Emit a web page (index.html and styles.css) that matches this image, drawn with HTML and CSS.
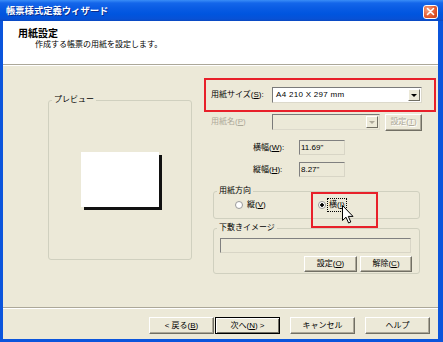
FILE: index.html
```html
<!DOCTYPE html>
<html>
<head>
    <meta charset="UTF-8" />
    <title>帳票様式定義ウィザード</title>
    <link rel="stylesheet" href="styles.css">
</head>
<body>
    <div class="window">
        <div class="titlebar">
            <span class="title">帳票様式定義ウィザード</span>
            <span class="close">
                <svg width="9" height="9" viewBox="0 0 9 9"><path d="M1.5 1.5 L7.5 7.5 M7.5 1.5 L1.5 7.5" stroke="#fff" stroke-width="1.6" stroke-linecap="round"/></svg>
            </span>
        </div>
        <div class="client">
            <div class="header">
                <div class="header-title">用紙設定</div>
                <div class="header-sub">作成する帳票の用紙を設定します。</div>
            </div>

            <div class="main">
                <fieldset class="group preview">
                    <legend>プレビュー</legend>
                    <div class="preview-area"><div class="paper"></div></div>
                </fieldset>

                <div class="settings">
                    <div class="row row-size">
                        <span class="label">用紙サイズ(<u>S</u>):</span>
                        <div class="combo size-combo">
                            <span class="combo-text">A4 210 X 297 mm</span>
                            <span class="drop"><span class="arrow"></span></span>
                        </div>
                    </div>
                    <div class="row row-name">
                        <span class="label disabled">用紙名(<u>P</u>)</span>
                        <div class="combo name-combo">
                            <span class="combo-text"></span>
                            <span class="drop"><span class="arrow"></span></span>
                        </div>
                        <button class="btn small disabled"><span>設定(<u>T</u>)</span></button>
                    </div>
                    <div class="row row-width">
                        <span class="label dim-label">横幅(<u>W</u>):</span>
                        <span class="field">11.69"</span>
                    </div>
                    <div class="row row-height">
                        <span class="label dim-label">縦幅(<u>H</u>):</span>
                        <span class="field">8.27"</span>
                    </div>

                    <fieldset class="group orient">
                        <legend>用紙方向</legend>
                        <div class="radios">
                            <span class="radio"><span class="dot"></span><span>縦(<u>V</u>)</span></span>
                            <span class="radio checked"><span class="dot"></span><span class="focus">横(<u>I</u>)</span></span>
                        </div>
                    </fieldset>

                    <fieldset class="group underlay">
                        <legend>下敷きイメージ</legend>
                        <span class="field wide"></span>
                        <div class="group-buttons">
                            <button class="btn set-btn"><span>設定(<u>O</u>)</span></button>
                            <button class="btn clear-btn"><span>解除(<u>C</u>)</span></button>
                        </div>
                    </fieldset>
                </div>

                <!-- annotation boxes and mouse pointer drawn over the dialog -->
                <div class="mark mark-size"></div>
                <div class="mark mark-orient"></div>
                <svg class="cursor" width="12" height="19" viewBox="0 0 12 19">
                    <path d="M0.5 0.5 L0.5 15.5 L4 12.2 L6.6 18 L8.8 17 L6.3 11.4 L11 11.4 Z" fill="#fff" stroke="#000" stroke-width="1" stroke-linejoin="round"/>
                </svg>
            </div>

            <div class="footer">
                <button class="btn nav"><span>&lt; 戻る(<u>B</u>)</span></button>
                <button class="btn nav default"><span>次へ(<u>N</u>) &gt;</span></button>
                <button class="btn nav spaced">キャンセル</button>
                <button class="btn nav spaced">ヘルプ</button>
            </div>
        </div>
    </div>
</body>
</html>
```

FILE: styles.css
```css
* {
    margin: 0;
    padding: 0;
    box-sizing: border-box;
}
body {
    font-family: "Liberation Sans", "Noto Sans CJK JP", sans-serif;
    font-size: 8px;
    line-height: 10px;
    color: #000;
    background: #fff;
    text-autospace: no-autospace;
}
.window {
    width: 443px;
    height: 342px;
    display: flex;
    flex-direction: column;
    background: #0B55DC;
}
.titlebar {
    height: 21px;
    flex: none;
    display: flex;
    align-items: center;
    justify-content: space-between;
    padding: 0 5px 0 6px;
    background: linear-gradient(#3A8DF7 0, #1466EA 3px, #0A5CE4 8px, #0055DF 14px, #0751D6 19px, #0A48C0 21px);
    color: #fff;
}
.title {
    font-size: 9.3px;
    font-weight: bold;
    text-shadow: 1px 1px 0 #0B2A8A;
}
.close {
    width: 15px;
    height: 14px;
    margin-top: 2px;
    border: 1px solid #fff;
    border-radius: 3px;
    background: radial-gradient(circle at 30% 30%, #F5A07E, #E2582E 60%, #C43D16);
    display: flex;
    align-items: center;
    justify-content: center;
}
.client {
    flex: 1;
    margin: 0 5px 3px 3px;
    background: #ECE9D8;
    display: flex;
    flex-direction: column;
}
.header {
    height: 44px;
    flex: none;
    background: #fff;
    border-bottom: 1px solid #ACA899;
    padding: 7px 0 0 15px;
}
.header-title {
    font-size: 10px;
    line-height: 12px;
    font-weight: bold;
}
.header-sub {
    padding-left: 17px;
    line-height: 10px;
}
.main {
    flex: 1;
    position: relative;
    display: flex;
    align-items: flex-start;
    border-top: 1px solid #fff;
    padding: 21px 0 0 45px;
}
.group {
    border: 1px solid #D0D0BF;
    border-radius: 3px;
}
.group legend {
    margin-left: 3px;
    padding: 0 2px;
    line-height: 10px;
}
.preview {
    width: 144px;
    height: 165px;
    margin-top: 8px;
}
.preview-area {
    height: 154px;
    display: flex;
    align-items: center;
    justify-content: center;
}
.paper {
    width: 78px;
    height: 55px;
    margin-bottom: 5px;
    background: #fff;
    box-shadow: 3px 3px 0 #111;
}
.settings {
    margin-left: 19px;
    width: 211px;
    display: flex;
    flex-direction: column;
}
.row {
    display: flex;
    align-items: center;
    height: 16px;
}
.row-name {
    margin-top: 11px;
}
.row-width {
    margin-top: 10px;
    height: 15px;
}
.row-height {
    margin-top: 7px;
    height: 15px;
}
.label {
    width: 61px;
}
.disabled {
    color: #ACA899;
}
.dim-label {
    margin-left: 42px;
    width: 46px;
}
.combo {
    height: 16px;
    display: flex;
    background: #fff;
    border: 1px solid;
    border-color: #7A7A7A #DCD9CB #DCD9CB #7A7A7A;
}
.combo-text {
    flex: 1;
    padding-left: 3px;
    line-height: 14px;
    letter-spacing: 0.3px;
}
.size-combo {
    width: 150px;
}
.name-combo {
    width: 108px;
    background: #ECE9D8;
}
.drop {
    width: 12px;
    margin: 1px;
    background: #ECE9D8;
    border: 1px solid;
    border-color: #fff #716F64 #716F64 #fff;
    display: flex;
    align-items: center;
    justify-content: center;
}
.arrow {
    border-left: 3px solid transparent;
    border-right: 3px solid transparent;
    border-top: 3px solid #000;
}
.name-combo .arrow {
    border-top-color: #ACA899;
}
.field {
    display: block;
    width: 46px;
    height: 15px;
    padding-left: 1px;
    line-height: 13px;
    background: #ECE9D8;
    border: 1px solid;
    border-color: #808080 #D8D5C6 #D8D5C6 #808080;
}
.btn {
    font-family: inherit;
    font-size: 8px;
    line-height: 10px;
    color: #000;
    background: #ECE9D8;
    border: 1px solid;
    border-color: #fff #716F64 #716F64 #fff;
    box-shadow: inset -1px -1px 0 #ACA899;
    display: flex;
    align-items: center;
    justify-content: center;
    text-autospace: no-autospace;
}
.btn.disabled {
    color: #ACA899;
    text-shadow: 1px 1px 0 #fff;
}
.btn.default {
    border-color: #000;
    box-shadow: inset 1px 1px 0 #fff, inset -1px -1px 0 #716F64;
}
.small {
    width: 37px;
    height: 17px;
    margin-left: 5px;
}
.orient {
    margin: 9px 0 0 2px;
    width: 207px;
    height: 33px;
}
.radios {
    display: flex;
    align-items: center;
    height: 12px;
    margin-top: 3px;
    padding-left: 21px;
}
.radio {
    display: flex;
    align-items: center;
    gap: 4px;
    width: 83px;
}
.dot {
    width: 8px;
    height: 8px;
    border-radius: 50%;
    border: 1px solid #9A9A9A;
    background: #fff;
}
.checked .dot {
    background: radial-gradient(circle, #000 0 1.5px, #fff 2px);
}
.checked {
    gap: 2px;
}
.focus {
    outline: 1px dotted #000;
    padding: 1px 1px;
}
.underlay {
    margin: 4px 0 0 2px;
    width: 207px;
    height: 51px;
}
.field.wide {
    width: 191px;
    margin: 5px 0 0 6px;
}
.group-buttons {
    display: flex;
    justify-content: flex-end;
    gap: 3px;
    margin-top: 3px;
    padding-right: 7px;
}
.set-btn {
    width: 53px;
    height: 16px;
}
.clear-btn {
    width: 52px;
    height: 16px;
}
.mark {
    position: absolute;
    border: 2px solid #E8202A;
}
.mark-size {
    left: 201px;
    top: 12px;
    width: 232px;
    height: 34px;
}
.mark-orient {
    left: 308px;
    top: 126px;
    width: 67px;
    height: 36px;
}
.cursor {
    position: absolute;
    left: 339px;
    top: 139px;
}
.footer {
    height: 32px;
    flex: none;
    border-top: 1px solid #ACA899;
    box-shadow: inset 0 1px 0 #fff;
    display: flex;
    justify-content: flex-end;
    align-items: flex-start;
    gap: 1px;
    padding: 9px 8px 0 0;
}
.nav {
    width: 65px;
    height: 17px;
}
.nav.spaced {
    margin-left: 9px;
}
```
